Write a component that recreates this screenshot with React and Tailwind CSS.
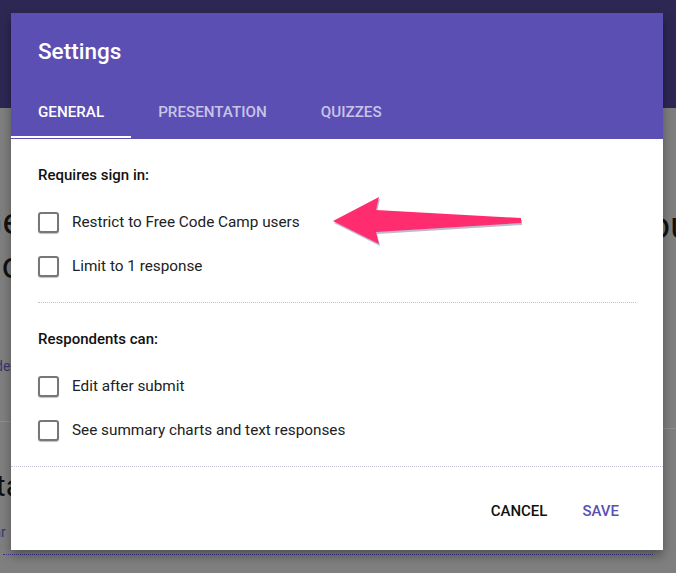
import { useState } from "react";

const tabs = ["GENERAL", "PRESENTATION", "QUIZZES"];

const Checkbox = ({ label }) => (
  <label className="flex h-[44px] items-center gap-[13px]">
    <span className="h-[21px] w-[21px] rounded-[3px] border-2 border-[#777777] bg-white shadow-[0_1px_1px_rgba(0,0,0,0.25)]" />
    <span className="text-[15.3px] text-[#202124]">{label}</span>
  </label>
);

const Arrow = () => (
  <svg
    className="absolute left-[330px] top-[194px]"
    width="196"
    height="56"
    viewBox="330 194 196 56"
  >
    <polygon
      points="334,223 380,199 377,212 522,220 522,225 377,234 380,246"
      fill="#bdb9cf"
    />
    <polygon
      points="333,221 379,197 376,210 521,218 521,223 376,232 379,244"
      fill="#ff2d6f"
    />
  </svg>
);

const SettingsDialog = () => {
  const [active, setActive] = useState(0);

  return (
    <div className="absolute left-[11px] top-[13px] flex h-[537px] w-[652px] flex-col bg-white shadow-[0_6px_10px_rgba(0,0,0,0.35)]">
      <div className="h-[126px] bg-[#5b4fb4] pt-[24px]">
        <h1 className="pl-[27px] text-[22.5px] font-medium leading-[28px] text-white">Settings</h1>
        <div className="mt-[21px] flex h-[53px]">
          {tabs.map((tab, i) => (
            <button
              key={tab}
              onClick={() => setActive(i)}
              className={`relative px-[27px] text-[15.2px] font-medium ${
                i === active ? "text-white" : "text-[#c9c4e8]"
              }`}
            >
              {tab}
              {i === active && <span className="absolute bottom-[1px] left-0 h-[2px] w-full bg-white" />}
            </button>
          ))}
        </div>
      </div>

      <div className="px-[27px] pt-[26px]">
        <p className="text-[15px] font-medium leading-5 text-[#111111]">Requires sign in:</p>
        <div className="mt-[15px]">
          <Checkbox label="Restrict to Free Code Camp users" />
          <Checkbox label="Limit to 1 response" />
        </div>
        <div className="mt-[14px] border-t border-dotted border-[#c3c0d6]" />
        <p className="mt-[26px] text-[15px] font-medium leading-5 text-[#111111]">Respondents can:</p>
        <div className="mt-[15px]">
          <Checkbox label="Edit after submit" />
          <Checkbox label="See summary charts and text responses" />
        </div>
      </div>

      <div className="mt-[14px] border-t border-dotted border-[#c3c0d6]" />

      <div className="flex flex-1 items-center justify-end gap-[35px] pr-[44px] pt-[6px]">
        <button className="text-[15px] font-medium text-[#111111]">CANCEL</button>
        <button className="text-[15px] font-medium text-[#5b4fb4]">SAVE</button>
      </div>
    </div>
  );
};

export default function App() {
  return (
    <div className="relative h-[573px] w-[676px] overflow-hidden bg-[#7f7f7f] font-['Roboto',sans-serif]">
      <div className="h-[108px] bg-[#2d2754]" />

      <div className="flex justify-between">
        <div className="ml-[-22px] flex flex-col">
          <span className="mt-[92px] text-[36px] leading-[44px] text-[#111111]">Get</span>
          <span className="text-[36px] leading-[44px] text-[#111111]">Do</span>
          <span className="mt-[68px] text-[14px] text-[#3a3470]">Code</span>
          <div className="mt-[44px] h-px w-[40px] bg-[#8f8f8f]" />
          <span className="mt-[46px] text-[30px] leading-[36px] text-[#111111]">Start</span>
          <span className="mt-[18px] text-[14px] text-[#3a3470]">Year</span>
        </div>
        <div className="mr-[-14px] flex flex-col">
          <span className="mt-[96px] text-[36px] leading-[44px] text-[#111111]">ou</span>
          <div className="mt-[180px] h-px w-[30px] bg-[#8f8f8f]" />
        </div>
      </div>

      <div className="absolute left-[3px] top-[554px] w-[650px] border-t border-dotted border-[#3a3490]" />

      <SettingsDialog />
      <Arrow />
    </div>
  );
}
